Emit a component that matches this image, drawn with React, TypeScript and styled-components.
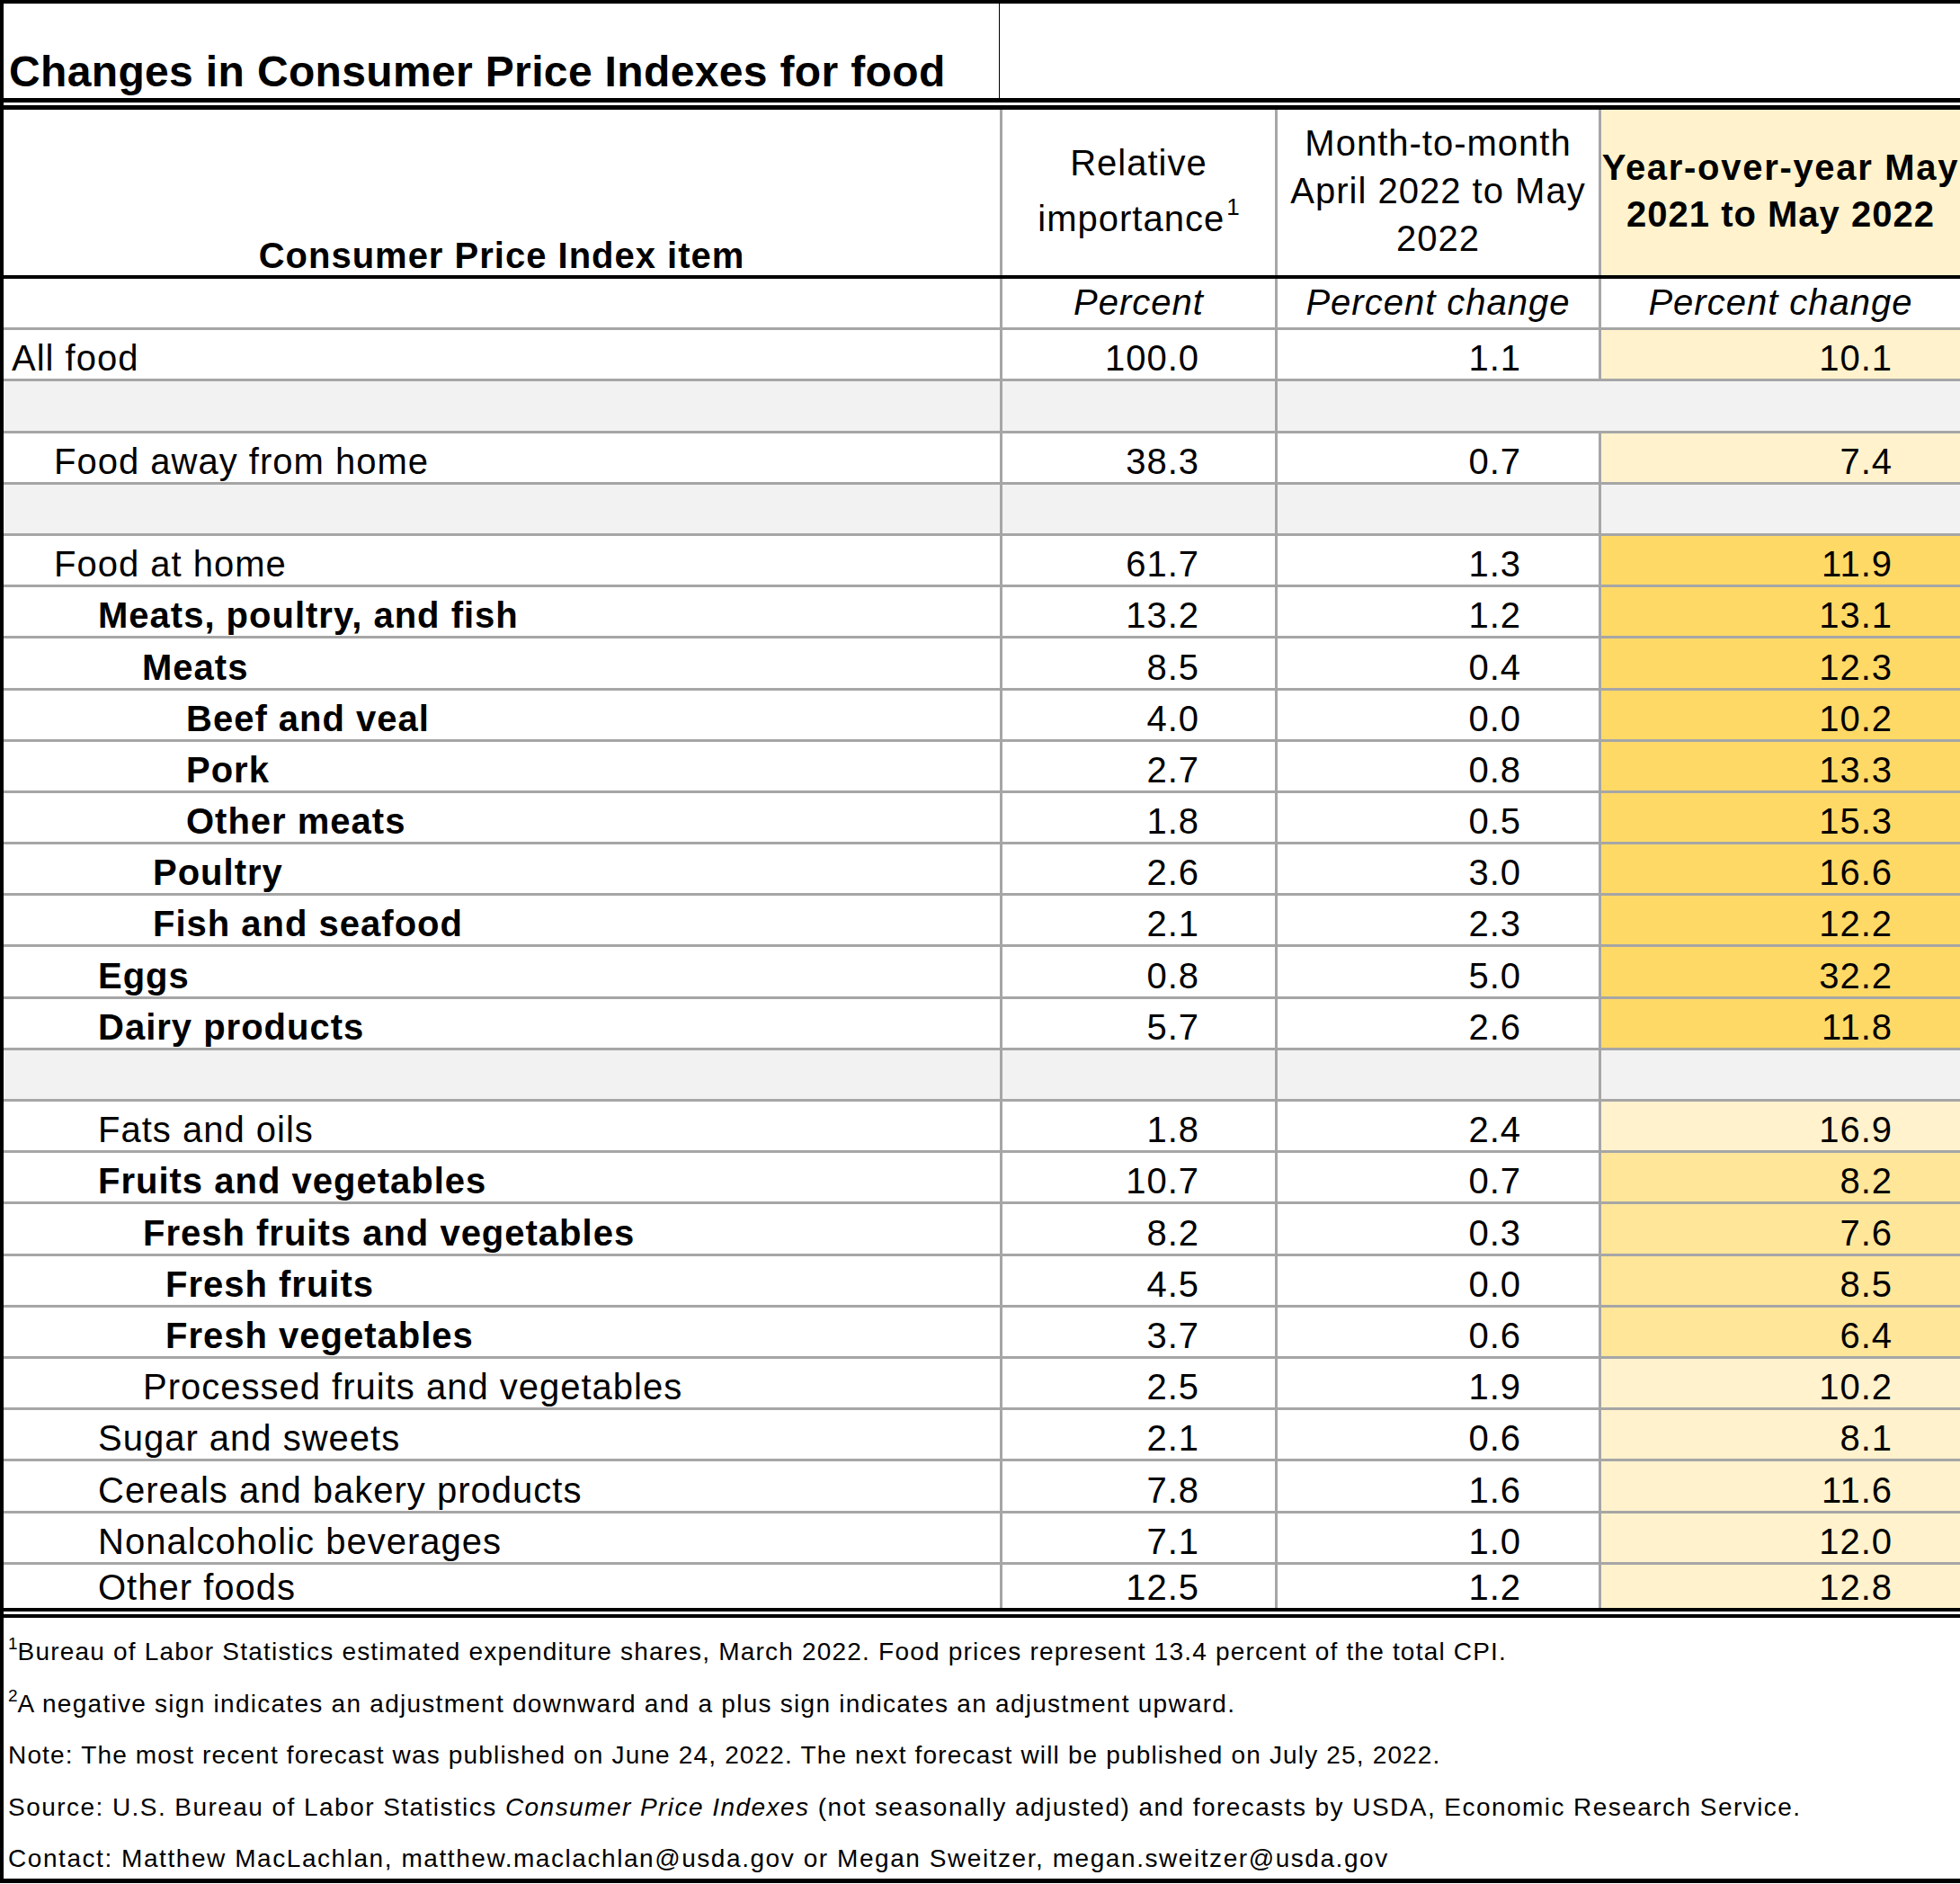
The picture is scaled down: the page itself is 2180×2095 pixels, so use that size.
import React from "react";
import styled, { createGlobalStyle, css } from "styled-components";

const GRID = "1108px 306px 360px 402px";
const GRAY_LINE = "#a6a6a6";
const BLANK_BG = "#f2f2f2";
const Y_LIGHT = "#fff2cc";
const Y_MID = "#ffe699";
const Y_DARK = "#ffd966";

const GlobalStyle = createGlobalStyle`
  html, body { margin: 0; padding: 0; background: #ffffff; }
  body {
    font-family: "Liberation Sans", Arial, Helvetica, sans-serif;
    color: #000000;
  }
  * { box-sizing: border-box; }
`;

const Frame = styled.div`
  width: 2180px;
  border-left: 4px solid #000;
  border-top: 4px solid #000;
  border-bottom: 5px solid #000;
  background: #fff;
  overflow: hidden;
`;

const TitleRow = styled.div`
  display: grid;
  grid-template-columns: 1108px 1fr;
  height: 110px;
  border-bottom: 5px solid #000;
`;

const TitleCell = styled.div`
  display: flex;
  align-items: flex-end;
  padding: 0 0 5px 6px;
  border-right: 4px solid #000;
  width: 1111px;
  font-size: 48px;
  line-height: 48px;
  font-weight: 700;
  letter-spacing: 0.35px;
  white-space: nowrap;
`;

const TitleBlank = styled.div`
  background: #fff;
`;

const RuleGap = styled.div`
  height: 3px;
  background: #fff;
`;

const Table = styled.div`
  border-top: 5px solid #000;
  border-bottom: 4px solid #000;
`;

const HeaderRow = styled.div`
  display: grid;
  grid-template-columns: ${GRID};
  height: 188px;
  border-bottom: 4px solid #000;
`;

const HeaderCell = styled.div<{ $divider?: boolean; $bg?: string; $bottom?: boolean; $lh?: number; $bold?: boolean }>`
  display: flex;
  flex-direction: column;
  align-items: center;
  justify-content: ${(p) => (p.$bottom ? "flex-end" : "center")};
  padding-bottom: ${(p) => (p.$bottom ? "2px" : "4px")};
  text-align: center;
  font-size: 40px;
  line-height: ${(p) => p.$lh ?? 40}px;
  letter-spacing: 1px;
  font-weight: ${(p) => (p.$bold ? 700 : 400)};
  background: ${(p) => p.$bg ?? "#fff"};
  white-space: nowrap;
  overflow: hidden;
  ${(p) =>
    p.$divider &&
    css`
      border-left: 3px solid ${GRAY_LINE};
    `}
`;

const HeadLine = styled.span<{ $spacing?: number }>`
  display: block;
  letter-spacing: ${(p) => p.$spacing ?? 1}px;
`;

const HeadSup = styled.sup`
  font-size: 26px;
  line-height: 0;
  vertical-align: 18px;
  letter-spacing: 0;
  margin-left: 2px;
`;

const Row = styled.div<{ $last?: boolean; $h?: number }>`
  display: grid;
  grid-template-columns: ${GRID};
  height: ${(p) => p.$h ?? 54.2}px;
  box-sizing: content-box;
  border-bottom: ${(p) => (p.$last ? "none" : `3px solid ${GRAY_LINE}`)};
`;

const Cell = styled.div<{ $divider?: boolean; $bg?: string; $span?: number }>`
  display: flex;
  align-items: flex-end;
  padding-bottom: 3px;
  font-size: 40px;
  line-height: 40px;
  letter-spacing: 1px;
  white-space: nowrap;
  background: ${(p) => p.$bg ?? "#fff"};
  ${(p) =>
    p.$divider &&
    css`
      border-left: 3px solid ${GRAY_LINE};
    `}
  ${(p) =>
    p.$span &&
    css`
      grid-column: span ${p.$span};
    `}
`;

const LabelCell = styled(Cell)<{ $indent: number; $bold?: boolean }>`
  padding-left: ${(p) => p.$indent}px;
  font-weight: ${(p) => (p.$bold ? 700 : 400)};
`;

const NumCell = styled(Cell)<{ $pad: number }>`
  justify-content: flex-end;
  padding-right: ${(p) => p.$pad}px;
`;

const UnitCell = styled(Cell)`
  justify-content: center;
  padding-bottom: 8px;
  font-style: italic;
`;

const Footer = styled.div`
  border-top: 4px solid #000;
  height: 294px;
  padding: 9px 0 0 5px;
  font-size: 28px;
  line-height: 57.5px;
  white-space: nowrap;
`;

const FootLine = styled.div<{ $spacing: number }>`
  height: 57.5px;
  letter-spacing: ${(p) => p.$spacing}px;
`;

const FootSup = styled.sup`
  font-size: 19px;
  line-height: 0;
  vertical-align: 12px;
  letter-spacing: 0;
`;

const FootEm = styled.em`
  font-style: italic;
`;

type DataRow =
  | { kind: "blank"; mergeRight?: boolean }
  | {
      kind: "data";
      label: string;
      indent: number;
      bold?: boolean;
      ri: string;
      mm: string;
      yy: string;
      tone: string;
    };

const rows: DataRow[] = [
  { kind: "data", label: "All food", indent: 9, ri: "100.0", mm: "1.1", yy: "10.1", tone: Y_LIGHT },
  { kind: "blank", mergeRight: true },
  { kind: "data", label: "Food away from home", indent: 56, ri: "38.3", mm: "0.7", yy: "7.4", tone: Y_LIGHT },
  { kind: "blank" },
  { kind: "data", label: "Food at home", indent: 56, ri: "61.7", mm: "1.3", yy: "11.9", tone: Y_DARK },
  { kind: "data", label: "Meats, poultry, and fish", indent: 105, bold: true, ri: "13.2", mm: "1.2", yy: "13.1", tone: Y_DARK },
  { kind: "data", label: "Meats", indent: 154, bold: true, ri: "8.5", mm: "0.4", yy: "12.3", tone: Y_DARK },
  { kind: "data", label: "Beef and veal", indent: 203, bold: true, ri: "4.0", mm: "0.0", yy: "10.2", tone: Y_DARK },
  { kind: "data", label: "Pork", indent: 203, bold: true, ri: "2.7", mm: "0.8", yy: "13.3", tone: Y_DARK },
  { kind: "data", label: "Other meats", indent: 203, bold: true, ri: "1.8", mm: "0.5", yy: "15.3", tone: Y_DARK },
  { kind: "data", label: "Poultry", indent: 166, bold: true, ri: "2.6", mm: "3.0", yy: "16.6", tone: Y_DARK },
  { kind: "data", label: "Fish and seafood", indent: 166, bold: true, ri: "2.1", mm: "2.3", yy: "12.2", tone: Y_DARK },
  { kind: "data", label: "Eggs", indent: 105, bold: true, ri: "0.8", mm: "5.0", yy: "32.2", tone: Y_DARK },
  { kind: "data", label: "Dairy products", indent: 105, bold: true, ri: "5.7", mm: "2.6", yy: "11.8", tone: Y_DARK },
  { kind: "blank" },
  { kind: "data", label: "Fats and oils", indent: 105, ri: "1.8", mm: "2.4", yy: "16.9", tone: Y_LIGHT },
  { kind: "data", label: "Fruits and vegetables", indent: 105, bold: true, ri: "10.7", mm: "0.7", yy: "8.2", tone: Y_MID },
  { kind: "data", label: "Fresh fruits and vegetables", indent: 155, bold: true, ri: "8.2", mm: "0.3", yy: "7.6", tone: Y_MID },
  { kind: "data", label: "Fresh fruits", indent: 180, bold: true, ri: "4.5", mm: "0.0", yy: "8.5", tone: Y_MID },
  { kind: "data", label: "Fresh vegetables", indent: 180, bold: true, ri: "3.7", mm: "0.6", yy: "6.4", tone: Y_MID },
  { kind: "data", label: "Processed fruits and vegetables", indent: 155, ri: "2.5", mm: "1.9", yy: "10.2", tone: Y_LIGHT },
  { kind: "data", label: "Sugar and sweets", indent: 105, ri: "2.1", mm: "0.6", yy: "8.1", tone: Y_LIGHT },
  { kind: "data", label: "Cereals and bakery products", indent: 105, ri: "7.8", mm: "1.6", yy: "11.6", tone: Y_LIGHT },
  { kind: "data", label: "Nonalcoholic beverages", indent: 105, ri: "7.1", mm: "1.0", yy: "12.0", tone: Y_LIGHT },
  { kind: "data", label: "Other foods", indent: 105, ri: "12.5", mm: "1.2", yy: "12.8", tone: Y_LIGHT },
];

export default function App() {
  return (
    <>
      <GlobalStyle />
      <Frame>
        <TitleRow>
          <TitleCell>Changes in Consumer Price Indexes for food</TitleCell>
          <TitleBlank />
        </TitleRow>
        <RuleGap />
        <Table>
          <HeaderRow>
            <HeaderCell $bottom $bold>
              Consumer Price Index item
            </HeaderCell>
            <HeaderCell $divider $lh={62}>
              <HeadLine>Relative</HeadLine>
              <HeadLine>
                importance<HeadSup>1</HeadSup>
              </HeadLine>
            </HeaderCell>
            <HeaderCell $divider $lh={53}>
              <HeadLine>Month-to-month</HeadLine>
              <HeadLine>April 2022 to May</HeadLine>
              <HeadLine>2022</HeadLine>
            </HeaderCell>
            <HeaderCell $divider $lh={52} $bold $bg={Y_LIGHT}>
              <HeadLine $spacing={1.7}>Year-over-year May</HeadLine>
              <HeadLine>2021 to May 2022</HeadLine>
            </HeaderCell>
          </HeaderRow>
          <Row>
            <Cell />
            <UnitCell $divider>Percent</UnitCell>
            <UnitCell $divider>Percent change</UnitCell>
            <UnitCell $divider>Percent change</UnitCell>
          </Row>
          {rows.map((r, i) => {
            const last = i === rows.length - 1;
            if (r.kind === "blank") {
              return (
                <Row key={i}>
                  <Cell $bg={BLANK_BG} />
                  <Cell $divider $bg={BLANK_BG} />
                  {r.mergeRight ? (
                    <Cell $divider $bg={BLANK_BG} $span={2} />
                  ) : (
                    <>
                      <Cell $divider $bg={BLANK_BG} />
                      <Cell $divider $bg={BLANK_BG} />
                    </>
                  )}
                </Row>
              );
            }
            return (
              <Row key={i} $last={last} $h={last ? 48.8 : undefined}>
                <LabelCell $indent={r.indent} $bold={r.bold}>
                  {r.label}
                </LabelCell>
                <NumCell $divider $pad={84}>
                  {r.ri}
                </NumCell>
                <NumCell $divider $pad={86}>
                  {r.mm}
                </NumCell>
                <NumCell $divider $pad={75} $bg={r.tone}>
                  {r.yy}
                </NumCell>
              </Row>
            );
          })}
        </Table>
        <RuleGap />
        <Footer>
          <FootLine $spacing={1.2}>
            <FootSup>1</FootSup>Bureau of Labor Statistics estimated expenditure shares, March 2022. Food prices
            represent 13.4 percent of the total CPI.
          </FootLine>
          <FootLine $spacing={1.27}>
            <FootSup>2</FootSup>A negative sign indicates an adjustment downward and a plus sign indicates an
            adjustment upward.
          </FootLine>
          <FootLine $spacing={1.16}>
            Note: The most recent forecast was published on June 24, 2022. The next forecast will be published on
            July 25, 2022.
          </FootLine>
          <FootLine $spacing={1.45}>
            Source: U.S. Bureau of Labor Statistics <FootEm>Consumer Price Indexes</FootEm> (not seasonally
            adjusted) and forecasts by USDA, Economic Research Service.
          </FootLine>
          <FootLine $spacing={1.56}>
            Contact: Matthew MacLachlan, matthew.maclachlan@usda.gov or Megan Sweitzer, megan.sweitzer@usda.gov
          </FootLine>
        </Footer>
      </Frame>
    </>
  );
}
